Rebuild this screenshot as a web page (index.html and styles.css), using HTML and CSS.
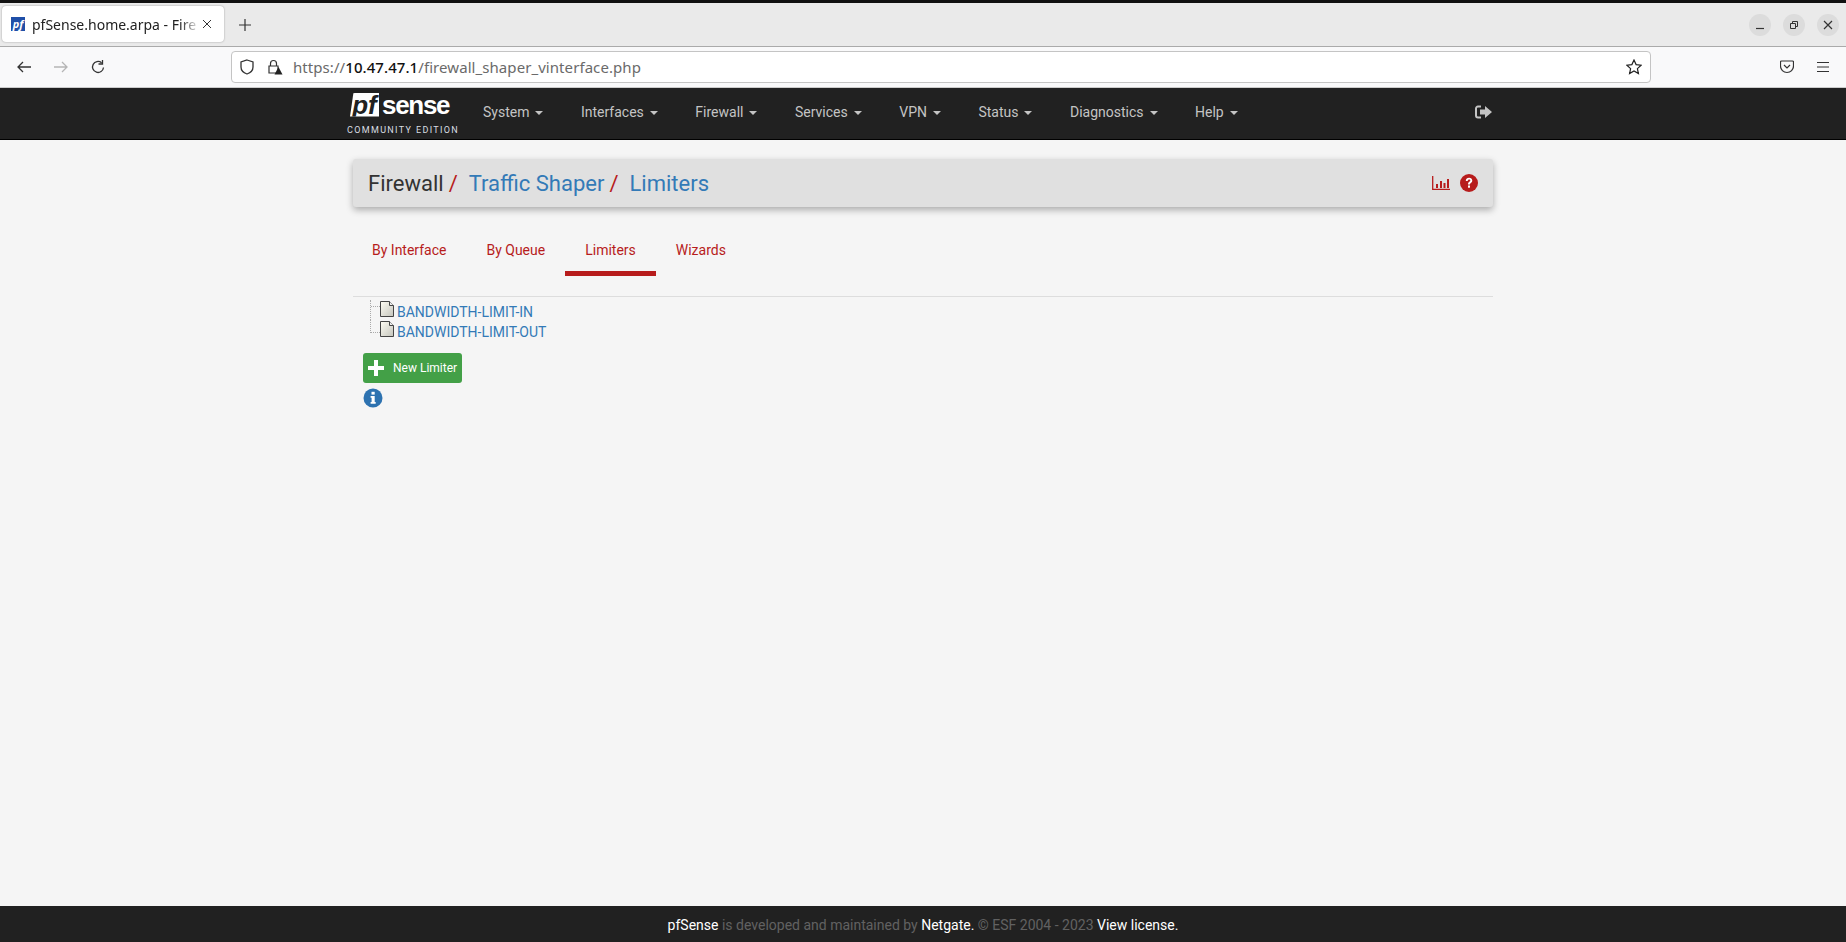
FILE: index.html
```html
<!DOCTYPE html>
<html lang="en">
<head>
  <meta charset="UTF-8">
  <title>pfSense.home.arpa - Firewall: Traffic Shaper: Limiters</title>
  <link rel="stylesheet" href="styles.css">
</head>
<body>

  <div class="tabBar">
    <div class="tab">
      <span class="favicon">pf</span>
      <span class="tabTitle">pfSense.home.arpa - Fire</span>
      <svg class="tabClose" width="10" height="10" viewBox="0 0 10 10"><path d="M1 1l8 8M9 1l-8 8" stroke="#333" fill="none"/></svg>
    </div>
    <svg class="newTab" width="12" height="12" viewBox="0 0 12 12"><path d="M6 0v12M0 6h12" stroke="#333" stroke-width="1.2" fill="none"/></svg>
    <div class="winButtons">
      <span class="winButton"><svg width="10" height="10" viewBox="0 0 10 10"><path d="M1 8.500h8" stroke="#333" stroke-width="1.2"/></svg></span>
      <span class="winButton"><svg width="10" height="10" viewBox="0 0 10 10"><path d="M1.500 3.500h5v5h-5zM3.500 3.500v-2h5v5h-2" stroke="#333" fill="none"/></svg></span>
      <span class="winButton"><svg width="10" height="10" viewBox="0 0 10 10"><path d="M1 1l8 8M9 1l-8 8" stroke="#333" stroke-width="1.2"/></svg></span>
    </div>
  </div>

  <div class="toolBar">
    <svg class="toolIcon" width="16" height="16" viewBox="0 0 16 16"><path d="M15 8H2M7 3L2 8l5 5" stroke="#333" stroke-width="1.3" fill="none"/></svg>
    <svg class="toolIcon" width="16" height="16" viewBox="0 0 16 16"><path d="M1 8h13M9 3l5 5-5 5" stroke="#b5b5b5" stroke-width="1.3" fill="none"/></svg>
    <svg class="toolIcon" width="16" height="16" viewBox="0 0 16 16"><path d="M13.500 8.500A5.500 5.500 0 1 1 11.500 3.700M12.500 1v4h-4" stroke="#333" stroke-width="1.3" fill="none"/></svg>
    <div class="urlBar">
      <svg width="14" height="16" viewBox="0 0 14 16"><path d="M7 1l6 2v5c0 3.500-3 6-6 7-3-1-6-3.500-6-7V3z" stroke="#333" stroke-width="1.3" fill="none"/></svg>
      <svg class="lockIcon" width="16" height="16" viewBox="0 0 16 16"><path d="M3.500 7V4.500a3 3 0 0 1 6 0V7M2 7h9v7H2z" stroke="#333" stroke-width="1.2" fill="none"/><path d="M11.500 8l4 7.500h-8z" fill="#222"/></svg>
      <span class="url">https://<b>10.47.47.1</b>/firewall_shaper_vinterface.php</span>
      <svg class="starIcon" width="16" height="16" viewBox="0 0 16 16"><path d="M8 1l2.100 4.600 5 .6-3.700 3.400 1 5L8 11.900l-4.400 2.700 1-5L.9 6.200l5-.6z" stroke="#222" stroke-width="1.2" fill="none"/></svg>
    </div>
    <svg class="pocketIcon" width="14" height="14" viewBox="0 0 14 14"><path d="M1.500 1h11a1 1 0 0 1 1 1v4a6.500 6.500 0 0 1-13 0V2a1 1 0 0 1 1-1z" stroke="#333" stroke-width="1.2" fill="none"/><path d="M4 5l3 3 3-3" stroke="#333" stroke-width="1.2" fill="none"/></svg>
    <svg class="menuIcon" width="12" height="10" viewBox="0 0 12 10"><path d="M0 .5h12M0 5h12M0 9.500h12" stroke="#333" fill="none"/></svg>
  </div>

  <nav class="navBar">
    <div class="navInner">
      <div class="logo">
        <div class="logoTop"><span class="logoPf">pf</span><span class="logoSense">sense</span></div>
        <div class="logoSub">COMMUNITY EDITION</div>
      </div>
      <ul class="navMenu">
        <li>System<i class="caret"></i></li>
        <li>Interfaces<i class="caret"></i></li>
        <li>Firewall<i class="caret"></i></li>
        <li>Services<i class="caret"></i></li>
        <li>VPN<i class="caret"></i></li>
        <li>Status<i class="caret"></i></li>
        <li>Diagnostics<i class="caret"></i></li>
        <li>Help<i class="caret"></i></li>
      </ul>
      <svg class="logoutIcon" width="18" height="14" viewBox="0 0 18 14"><path d="M6 1.500H3A2 2 0 0 0 1 3.500v7a2 2 0 0 0 2 2h3" stroke="#c4c4c4" stroke-width="2" fill="none"/><path d="M5 4.500h5V1l7 6-7 6V9.500H5z" fill="#c4c4c4"/></svg>
    </div>
  </nav>

  <main class="container">
    <div class="breadcrumb">
      <span class="crumbDark">Firewall</span><span class="slash">/</span>
      <a class="crumbLink">Traffic Shaper</a><span class="slash">/</span>
      <a class="crumbLink">Limiters</a>
      <span class="crumbIcons">
        <svg width="18" height="14" viewBox="0 0 18 14"><path d="M.7 0v13.300H18" stroke="#b71c1c" stroke-width="1.3" fill="none"/><path d="M4 8h2v4H4zM8 5h2v7H8zM11.500 7h2v5h-2zM15 3h2v9h-2z" fill="#b71c1c"/></svg>
        <svg width="18" height="18" viewBox="0 0 18 18"><circle cx="9" cy="9" r="9" fill="#b71c1c"/><path d="M5.800 7c0-2 1.500-3.200 3.300-3.200S12.300 5 12.300 6.700c0 2.200-2.400 2.200-2.400 3.800H8c0-2.700 2.300-2.700 2.300-3.900 0-.6-.5-1-1.200-1s-1.300.5-1.400 1.500z" fill="#fff"/><rect x="8" y="11.500" width="2" height="2.200" fill="#fff"/></svg>
      </span>
    </div>

    <ul class="tabs">
      <li>By Interface</li>
      <li>By Queue</li>
      <li class="active">Limiters</li>
      <li>Wizards</li>
    </ul>

    <div class="tree">
      <div class="treeRow">
        <span class="treeLine"></span>
        <svg class="pageIcon" width="14" height="16" viewBox="0 0 14 16"><defs><linearGradient id="paper" x1="0" y1="0" x2="1" y2="1"><stop offset="0" stop-color="#fffef4"/><stop offset="1" stop-color="#c4c4bc"/></linearGradient></defs><path d="M.5.500h9l4 4v11H.5z" fill="url(#paper)" stroke="#444"/><path d="M9.500.500v4h4" fill="#eee" stroke="#444"/></svg>
        <a>BANDWIDTH-LIMIT-IN</a>
      </div>
      <div class="treeRow">
        <span class="treeLine lastLine"></span>
        <svg class="pageIcon" width="14" height="16" viewBox="0 0 14 16"><path d="M.5.500h9l4 4v11H.5z" fill="url(#paper)" stroke="#444"/><path d="M9.500.500v4h4" fill="#eee" stroke="#444"/></svg>
        <a>BANDWIDTH-LIMIT-OUT</a>
      </div>
    </div>

    <button class="newButton">
      <svg width="16" height="16" viewBox="0 0 16 16"><path d="M6 0h4v6h6v4h-6v6H6v-6H0V6h6z" fill="#fff"/></svg>
      New Limiter
    </button>

    <svg class="infoIcon" width="20" height="20" viewBox="0 0 20 20"><circle cx="10" cy="10" r="9.500" fill="#2d72b0"/><rect x="8.500" y="3.800" width="3.200" height="2.800" fill="#fff"/><path d="M7.600 8h4.100v6h1v1.800H7.600V14h1v-4.200h-1z" fill="#fff"/></svg>
  </main>

  <footer class="footer">
    <span class="white">pfSense</span>&nbsp;is developed and maintained by&nbsp;<span class="white">Netgate.</span>&nbsp;© ESF 2004 - 2023&nbsp;<span class="white">View license.</span>
  </footer>

</body>
</html>
```

FILE: styles.css
```css
html, body {
  height: 100%;
}

body {
  margin: 0;
  height: 942px;
  overflow: hidden;
  display: flex;
  flex-direction: column;
  font-family: Roboto, "Liberation Sans", sans-serif;
  font-size: 14px;
  color: #333;
  background-color: #f5f5f5;
  border-top: 3px solid #111;
  box-sizing: border-box;
}

ul {
  list-style: none;
  margin: 0;
  padding: 0;
}

/* browser chrome */
.tabBar {
  height: 44px;
  flex: none;
  box-sizing: border-box;
  display: flex;
  align-items: center;
  padding-left: 2px;
  background-color: #eaeaea;
  border-bottom: 1px solid #aaa;
}

.tab {
  width: 222px;
  height: 36px;
  margin-bottom: 1px;
  padding: 0 12px 0 9px;
  box-sizing: border-box;
  display: flex;
  align-items: center;
  background-color: #fff;
  border-radius: 4px;
  box-shadow: 0 0 2px rgba(0, 0, 0, 0.35);
  font-family: "Noto Sans", sans-serif;
  font-size: 14px;
}

.favicon {
  width: 14px;
  height: 14px;
  flex: none;
  margin-right: 7px;
  background-color: #1f4fa8;
  color: #fff;
  font-size: 11px;
  line-height: 13px;
  font-weight: bold;
  font-style: italic;
  text-align: center;
}

.tabTitle {
  flex: 1;
  white-space: nowrap;
  color: #222;
  -webkit-mask-image: linear-gradient(to right, #000 88%, transparent 100%);
  mask-image: linear-gradient(to right, #000 88%, transparent 100%);
}

.tabClose {
  flex: none;
  margin-left: 2px;
}

.newTab {
  margin-left: 15px;
}

.winButtons {
  margin-left: auto;
  margin-right: 7px;
  display: flex;
  gap: 12px;
}

.winButton {
  width: 22px;
  height: 22px;
  display: flex;
  align-items: center;
  justify-content: center;
  border-radius: 50%;
  background-color: #dcdcdc;
}

.toolBar {
  height: 41px;
  flex: none;
  box-sizing: border-box;
  display: flex;
  align-items: center;
  padding-left: 16px;
  background-color: #f9f9fa;
  border-bottom: 1px solid #ccc;
}

.toolIcon {
  margin-right: 21px;
}

.urlBar {
  width: 1420px;
  height: 32px;
  margin-left: 104px;
  padding: 0 8px;
  box-sizing: border-box;
  display: flex;
  align-items: center;
  background-color: #fff;
  border: 1px solid #c4c4c4;
  border-radius: 4px;
}

.lockIcon {
  margin-left: 13px;
}

.url {
  margin-left: 10px;
  font-family: "Noto Sans", sans-serif;
  font-size: 15px;
  letter-spacing: 0.07px;
  color: #6a6a6a;
}

.url b {
  font-weight: 500;
  color: #111;
}

.starIcon {
  margin-left: auto;
}

.pocketIcon {
  margin-left: 129px;
}

.menuIcon {
  margin-left: 23px;
}

/* pfSense navbar */
.navBar {
  height: 52px;
  flex: none;
  box-sizing: border-box;
  background-color: #212121;
  border-bottom: 1px solid #000;
}

.navInner {
  width: 1140px;
  height: 100%;
  margin: 0 auto;
  padding-bottom: 3px;
  box-sizing: border-box;
  display: flex;
  align-items: center;
  color: #c4c4c4;
}

.logo {
  width: 115px;
  margin: 3px 0 0 -6px;
  color: #fff;
  flex: none;
}

.logoTop {
  display: flex;
  align-items: center;
  height: 24px;
  padding-left: 3px;
}

.logoPf {
  width: 29px;
  height: 24px;
  margin-right: 3px;
  background-color: #fff;
  color: #212121;
  font: italic bold 26px/24px "Liberation Sans", sans-serif;
  text-align: center;
  border-radius: 5px 0 0 0;
  clip-path: polygon(12% 0, 100% 0, 100% 100%, 0 100%);
}

.logoSense {
  font: bold 26px/24px "Liberation Sans", sans-serif;
  letter-spacing: -1.3px;
}

.logoSub {
  font-size: 9px;
  line-height: 10px;
  letter-spacing: 1.35px;
  margin-top: 8px;
  color: #d8dde2;
  white-space: nowrap;
}

.navMenu {
  display: flex;
  margin-left: 6px;
}

.navMenu li {
  padding: 0 15px;
  margin-right: 7.5px;
  line-height: 20px;
}

.caret {
  display: inline-block;
  margin-left: 6px;
  vertical-align: middle;
  border-top: 4px solid #c4c4c4;
  border-left: 4px solid transparent;
  border-right: 4px solid transparent;
}

.logoutIcon {
  margin-left: auto;
}

/* page */
.container {
  width: 1140px;
  margin: 0 auto;
  flex: 1;
  display: flex;
  flex-direction: column;
  align-items: flex-start;
}

.breadcrumb {
  width: 100%;
  height: 48px;
  margin-top: 19px;
  padding: 0 15px;
  box-sizing: border-box;
  display: flex;
  align-items: center;
  font-size: 22px;
  background-color: #e0e0e0;
  border-radius: 3px;
  box-shadow: 0 3px 7px rgba(0, 0, 0, 0.3);
}

.crumbDark {
  color: #333;
}

.crumbLink {
  color: #337ab7;
}

.slash {
  color: #b71c1c;
  margin: 0 11px 0 5px;
}

.crumbIcons {
  margin-left: auto;
  display: flex;
  align-items: center;
  gap: 10px;
}

.tabs {
  width: 100%;
  height: 90px;
  padding-top: 22px;
  box-sizing: border-box;
  display: flex;
  border-bottom: 1px solid #ddd;
  align-items: flex-start;
}

.tabs li {
  height: 47px;
  padding: 0 20px;
  line-height: 42px;
  box-sizing: border-box;
  color: #b71c1c;
}

.tabs li:first-child {
  padding-left: 19px;
}

.tabs li.active {
  border-bottom: 5px solid #b71c1c;
}

.tree {
  margin: 3px 0 0 17px;
}

.treeRow {
  height: 20px;
  display: flex;
  align-items: center;
}

.treeRow a {
  color: #337ab7;
  line-height: 20px;
  margin-top: 3px;
}

.pageIcon {
  margin-right: 3px;
  flex: none;
  margin-top: -3px;
}

.treeLine {
  width: 10px;
  height: 20px;
  flex: none;
  box-sizing: border-box;
  border-left: 1px dotted #aaa;
  background: repeating-linear-gradient(to right, #aaa 0 1px, transparent 1px 2px) 0 6px / 9px 1px no-repeat;
}

.lastLine {
  height: 13px;
  margin-top: -7px;
  background: none;
  border-bottom: 1px dotted #aaa;
}

.newButton {
  height: 30px;
  margin: 13px 0 0 10px;
  padding: 0 5px;
  display: flex;
  align-items: center;
  gap: 9px;
  font-family: inherit;
  font-size: 12px;
  color: #fff;
  background-color: #43a047;
  border: 0;
  border-radius: 3px;
}

.infoIcon {
  margin: 5px 0 0 10px;
}

.footer {
  height: 36px;
  padding-top: 1px;
  box-sizing: border-box;
  flex: none;
  display: flex;
  justify-content: center;
  align-items: center;
  background-color: #212121;
  color: #616161;
}

.white {
  color: #fff;
}
```
